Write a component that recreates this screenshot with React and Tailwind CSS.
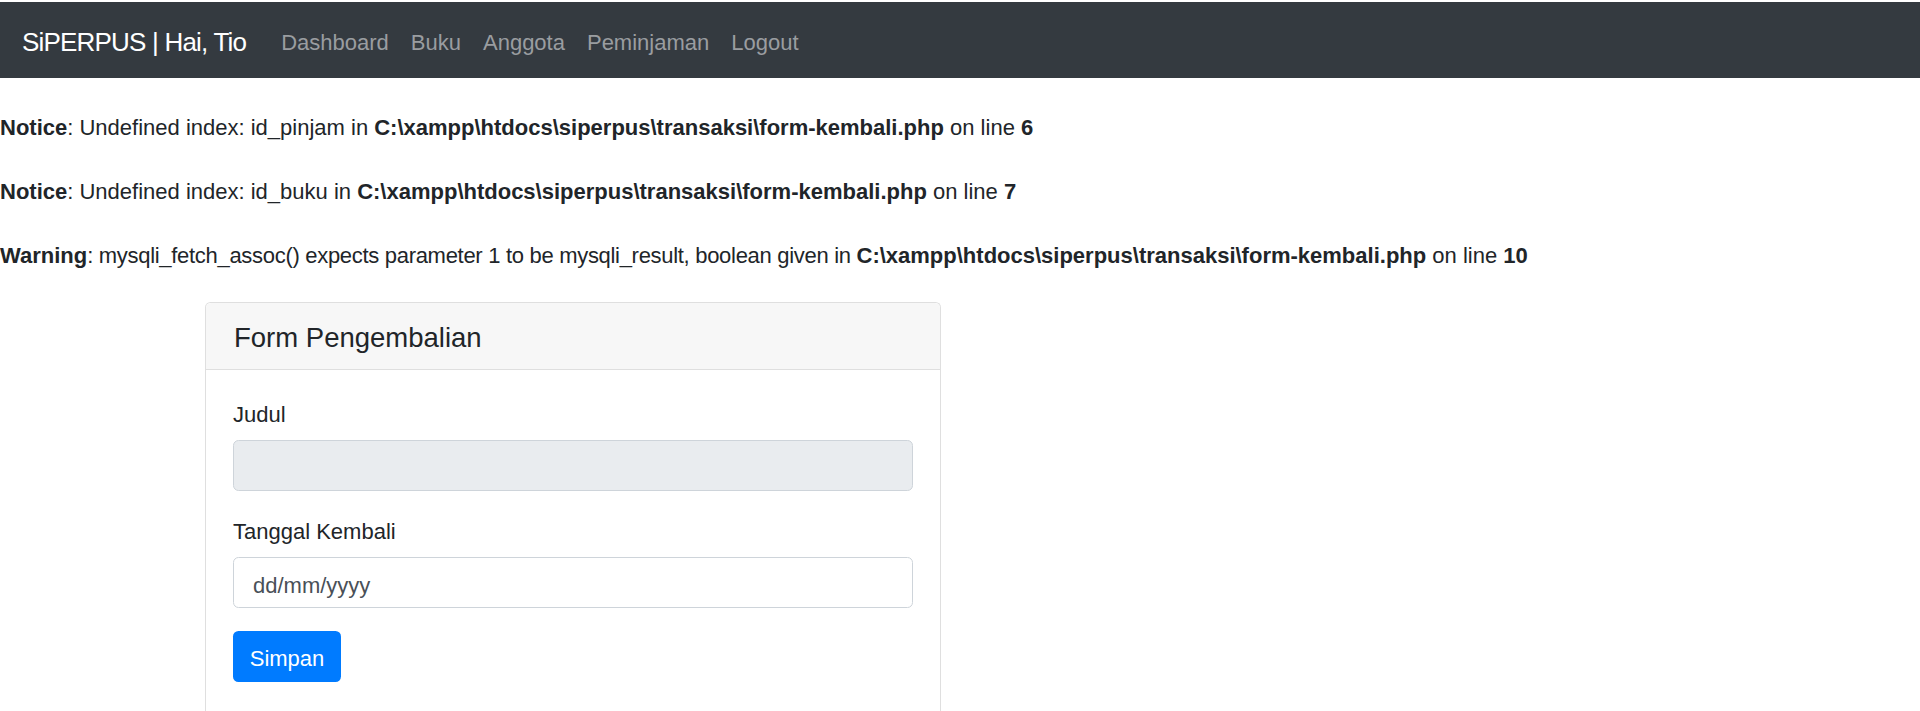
export default function App() {
  const lines = [
    { label: "Notice", msg: "Undefined index: id_pinjam in ", line: "6", tight: false },
    { label: "Notice", msg: "Undefined index: id_buku in ", line: "7", tight: false },
    {
      label: "Warning",
      msg: "mysqli_fetch_assoc() expects parameter 1 to be mysqli_result, boolean given in ",
      line: "10",
      tight: true,
    },
  ];
  return (
    <div className="min-h-[711px] bg-white font-['Liberation_Sans',Arial,sans-serif] text-[#212529]">
      <nav className="mt-[2px] flex h-[76px] items-center bg-[#343a40] px-[22px]">
        <span className="mr-[24px] pt-[5px] text-[26px] leading-[41px] tracking-[-0.8px] text-white">
          SiPERPUS | Hai, Tio
        </span>
        <div className="flex items-center">
          {["Dashboard", "Buku", "Anggota", "Peminjaman", "Logout"].map((t) => (
            <a key={t} className="px-[11px] pt-[4px] text-[22px] leading-[33px] text-[#9a9da0]">
              {t}
            </a>
          ))}
        </div>
      </nav>
      <div className="flex flex-col gap-[32px] pb-[30px] pt-[34px] text-[22px] leading-[32px]">
        {lines.map((l, i) => (
          <div key={i} className="whitespace-nowrap">
            <b className="font-bold">{l.label}</b>
            <span className={l.tight ? "tracking-[-0.3px]" : ""}>: {l.msg}</span>
            <b className="font-bold">C:\xampp\htdocs\siperpus\transaksi\form-kembali.php</b> on line{" "}
            <b className="font-bold">{l.line}</b>
          </div>
        ))}
      </div>
      <div className="ml-[205px] w-[736px] rounded-t-[5.5px] border border-b-0 border-[#dfdfdf]">
        <div className="flex h-[67px] items-center rounded-t-[5.5px] border-b border-[#dfdfdf] bg-[#f7f7f7] px-[28px]">
          <h5 className="pt-[3px] text-[27.5px] leading-[33px]">Form Pengembalian</h5>
        </div>
        <div className="px-[27px] pb-[30px] pt-[26px]">
          <div className="mb-[22px]">
            <label className="mb-[9px] block pt-[2px] text-[22px] leading-[33px]">Judul</label>
            <div className="h-[51px] w-full rounded-[5.5px] border border-[#ced4da] bg-[#e9ecef]"></div>
          </div>
          <div className="mb-[23px]">
            <label className="mb-[9px] block pt-[2px] text-[22px] leading-[33px]">Tanggal Kembali</label>
            <div className="flex h-[51px] w-full items-center rounded-[5.5px] border border-[#ced4da] bg-white pl-[19px] pt-[6px] text-[22px] text-[#495057]">
              dd/mm/yyyy
            </div>
          </div>
          <button className="flex h-[51px] w-[108px] items-center justify-center rounded-[5.5px] bg-[#007bff] pt-[4px] text-[22px] text-white">
            Simpan
          </button>
        </div>
      </div>
    </div>
  );
}
